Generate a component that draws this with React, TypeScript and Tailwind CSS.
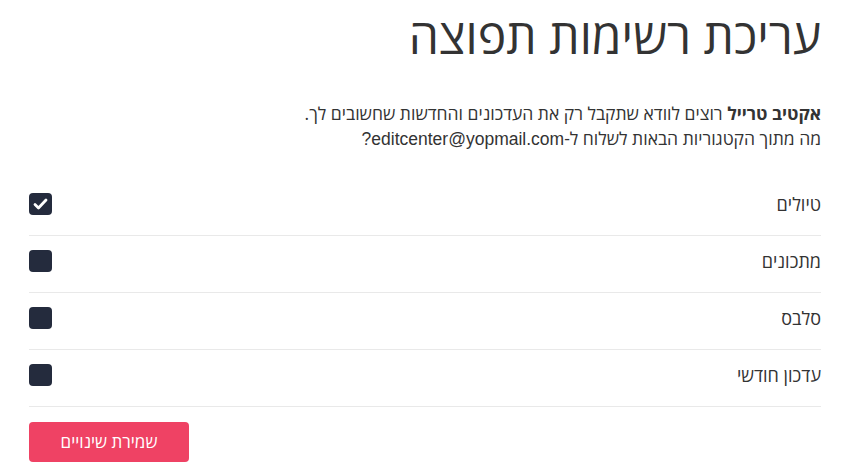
import React, { useState } from "react";

const categories = [
  { id: "trips", label: "טיולים", checked: true },
  { id: "recipes", label: "מתכונים", checked: false },
  { id: "salsa", label: "סלבס", checked: false },
  { id: "monthly", label: "עדכון חודשי", checked: false },
];

export default function App() {
  const [items, setItems] = useState(categories);

  const toggle = (id: string) =>
    setItems(prev => prev.map(i => (i.id === id ? { ...i, checked: !i.checked } : i)));

  return (
    <div
      dir="rtl"
      className="w-[865px] h-[471px] bg-white overflow-hidden text-[#333333]"
      style={{ fontFamily: '"Open Sans", "DejaVu Sans", sans-serif' }}
    >
      <div className="mr-[44px] ml-[29px] pt-[6px]">
        {/* Title */}
        <h1 className="text-[48px] leading-[60px] font-normal text-[#333333]">
          עריכת רשימות תפוצה
        </h1>

        {/* Intro */}
        <div className="mt-[35px] text-[17.5px] leading-[25px]">
          <p>
            <span className="font-bold">אקטיב טרייל</span> רוצים לוודא שתקבל רק את העדכונים והחדשות שחשובים לך.
          </p>
          <p>
            מה מתוך הקטגוריות הבאות לשלוח ל-
            <span className="font-['Liberation_Sans',Arial,sans-serif]">editcenter@yopmail.com?</span>
          </p>
        </div>

        {/* Categories */}
        <ul className="mt-[27px]">
          {items.map(item => (
            <li
              key={item.id}
              className="flex items-center justify-between h-[57px] border-b border-[#e9e9e9] pb-[6px]"
            >
              <span className="text-[18px]">{item.label}</span>
              <button
                type="button"
                onClick={() => toggle(item.id)}
                className="w-[23px] h-[22px] rounded-[4px] bg-[#242b3d] flex items-center justify-center"
              >
                {item.checked && (
                  <svg width="15" height="12" viewBox="0 0 15 12">
                    <path
                      d="M2 6.5 L5.5 10 L13 2"
                      fill="none"
                      stroke="white"
                      strokeWidth="2.8"
                      strokeLinecap="round"
                      strokeLinejoin="round"
                    />
                  </svg>
                )}
              </button>
            </li>
          ))}
        </ul>

        {/* Save */}
        <div className="flex justify-end mt-[15px]">
          <button
            type="button"
            className="w-[160px] h-[40px] rounded-[4px] bg-[#ef4264] text-white text-[17px]"
          >
            שמירת שינויים
          </button>
        </div>
      </div>
    </div>
  );
}
